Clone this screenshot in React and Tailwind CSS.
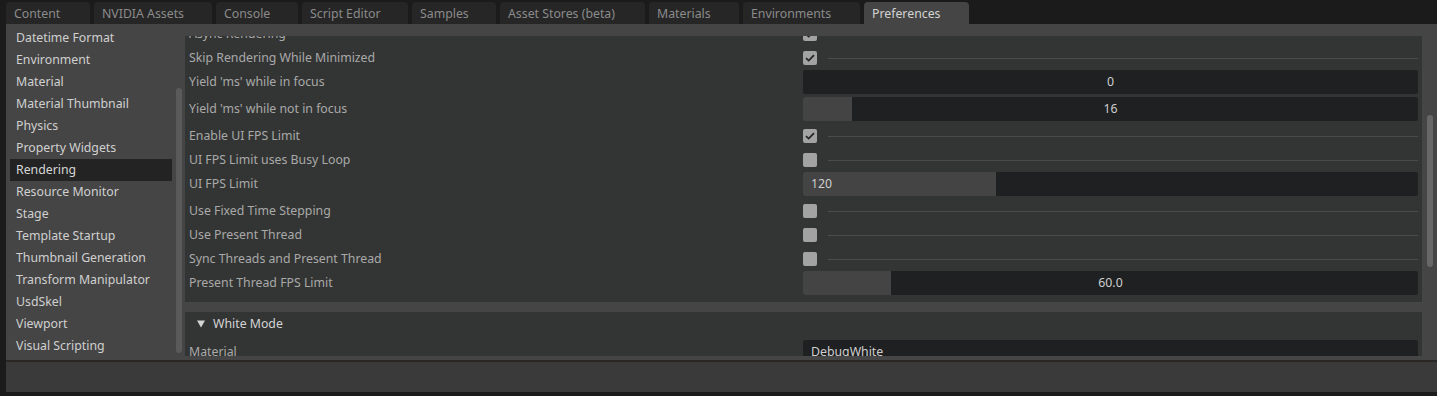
const tabs = [
  { name: "Content", w: "w-[84px]" },
  { name: "NVIDIA Assets", w: "w-[118px]" },
  { name: "Console", w: "w-[82px]" },
  { name: "Script Editor", w: "w-[106px]" },
  { name: "Samples", w: "w-[84px]" },
  { name: "Asset Stores (beta)", w: "w-[145px]" },
  { name: "Materials", w: "w-[90px]" },
  { name: "Environments", w: "w-[117px]" },
  { name: "Preferences", w: "w-[105px]", active: true },
];

const pages = [
  "Datetime Format",
  "Environment",
  "Material",
  "Material Thumbnail",
  "Physics",
  "Property Widgets",
  "Rendering",
  "Resource Monitor",
  "Stage",
  "Template Startup",
  "Thumbnail Generation",
  "Transform Manipulator",
  "UsdSkel",
  "Viewport",
  "Visual Scripting",
];

function Check({ on }) {
  return (
    <div className="flex h-6 items-center">
      <div className="flex h-[14px] w-[14px] items-center justify-center rounded-[2px] bg-[#a3a3a3]">
        {on && (
          <svg width="10" height="8" viewBox="0 0 10 8" fill="none">
            <path d="M1 4.2 3.7 6.6 9 1.2" stroke="#262626" strokeWidth="1.8" />
          </svg>
        )}
      </div>
      <div className="ml-[11px] h-px flex-1 bg-[#4a4b4b]" />
    </div>
  );
}

function Field({ value, fill, left }) {
  return (
    <div className="relative mb-[3px] flex h-6 items-center overflow-hidden rounded-[2px] bg-[#1f2022]">
      {fill && <div className={`h-full bg-[#444444] ${fill}`} />}
      <span
        className={
          left
            ? "absolute left-2 text-[#cfcfcf]"
            : "absolute inset-x-0 text-center text-[#cfcfcf]"
        }
      >
        {value}
      </span>
    </div>
  );
}

function Row({ label, children }) {
  return (
    <div className="flex">
      <div className="flex h-6 w-[614px] shrink-0 items-center text-[#a9a9a9]">{label}</div>
      <div className="flex-1">{children}</div>
    </div>
  );
}

export default function App() {
  return (
    <div className="flex h-[396px] w-[1437px] flex-col overflow-hidden bg-[#1b1b1b] font-['Noto_Sans',sans-serif] text-[12.3px]">
      {/* tab strip */}
      <div className="flex h-6 shrink-0 items-end gap-[4px] pl-[6px]">
        {tabs.map((t) => (
          <div
            key={t.name}
            className={
              t.active
                ? `flex h-[22px] items-center rounded-t-[4px] bg-[#454545] pt-[2px] pl-2 text-[#d3d3d3] ${t.w}`
                : `flex h-[22px] items-center rounded-t-[4px] bg-[#262626] pt-[2px] pl-2 text-[#8b8b8b] ${t.w}`
            }
          >
            {t.name}
          </div>
        ))}
      </div>

      {/* preferences window */}
      <div className="ml-[6px] flex h-[336px] shrink-0 bg-[#454545]">
        {/* page list */}
        <div className="flex w-[176px] shrink-0">
          <div className="w-[170px] pt-[3px] pl-1">
            {pages.map((p) => (
              <div
                key={p}
                className={
                  p === "Rendering"
                    ? "flex h-[22px] w-[162px] items-center bg-[#232323] pl-[6px] text-[#d6d6d6]"
                    : "flex h-[22px] w-[162px] items-center pl-[6px] text-[#d0d0d0]"
                }
              >
                {p}
              </div>
            ))}
          </div>
          <div className="mt-16 h-[265px] w-[6px] rounded-full bg-[#5a5a5a]" />
        </div>

        {/* settings scroll area */}
        <div className="ml-[3px] mt-3 h-[320px] w-[1237px] overflow-hidden">
          <div className="-mt-[18px]">
            <div className="bg-[#333534] px-1 pt-1 pb-[4px]">
              <Row label="Async Rendering"><Check on /></Row>
              <Row label="Skip Rendering While Minimized"><Check on /></Row>
              <Row label="Yield 'ms' while in focus"><Field value="0" /></Row>
              <Row label="Yield 'ms' while not in focus"><Field value="16" fill="w-[49px]" /></Row>
              <Row label="Enable UI FPS Limit"><Check on /></Row>
              <Row label="UI FPS Limit uses Busy Loop"><Check /></Row>
              <Row label="UI FPS Limit"><Field value="120" fill="w-[193px]" left /></Row>
              <Row label="Use Fixed Time Stepping"><Check /></Row>
              <Row label="Use Present Thread"><Check /></Row>
              <Row label="Sync Threads and Present Thread"><Check /></Row>
              <Row label="Present Thread FPS Limit"><Field value="60.0" fill="w-[88px]" /></Row>
            </div>

            <div className="mt-[10px] bg-[#333534] px-1 pb-2">
              <div className="flex h-6 items-center text-[#d4d4d4]">
                <svg className="ml-2 mr-[8px]" width="8" height="8" viewBox="0 0 8 8">
                  <path d="M0 0.5h8L4 7.5z" fill="#d4d4d4" />
                </svg>
                White Mode
              </div>
              <div className="mt-1">
                <Row label="Material"><Field value="DebugWhite" left /></Row>
              </div>
            </div>
          </div>
        </div>

        {/* scrollbar */}
        <div className="flex w-[15px] shrink-0 justify-center">
          <div className="mt-[91px] h-[152px] w-[6px] rounded-full bg-[#676767]" />
        </div>
      </div>

      <div className="ml-[6px] h-[2px] shrink-0 bg-[#2a2624]" />
      <div className="ml-[6px] h-[30px] shrink-0 bg-[#3a3a3a]" />
    </div>
  );
}
